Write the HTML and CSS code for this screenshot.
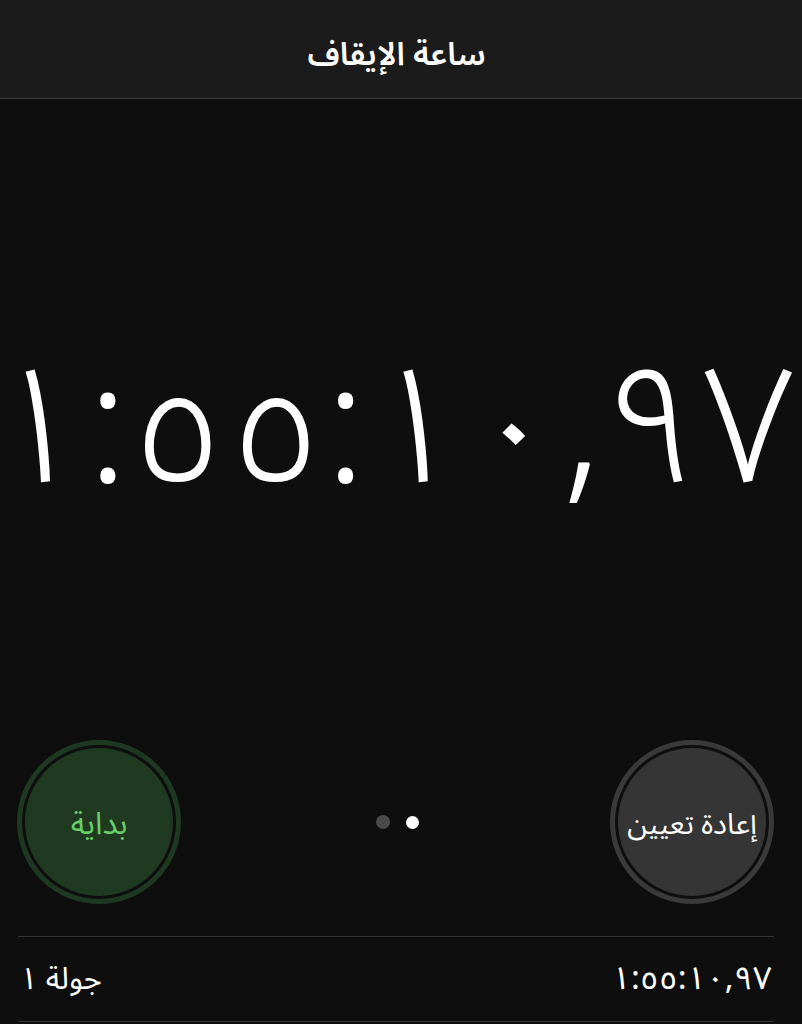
FILE: index.html
```html
<!DOCTYPE html>
<html lang="ar" dir="rtl">
<head>
<meta charset="utf-8">
<title>ساعة الإيقاف</title>
<link rel="stylesheet" href="styles.css">
</head>
<body>
<div class="app">
  <header class="topbar">
    <h1 class="title">ساعة الإيقاف</h1>
  </header>
  <main class="main">
    <div class="clock"><span class="clock-text">١:٥٥:١٠,٩٧</span></div>
    <div class="controls">
      <button class="btn btn-reset"><span class="btn-inner">إعادة تعيين</span></button>
      <div class="pager">
        <span class="dot dot-on"></span>
        <span class="dot dot-off"></span>
      </div>
      <button class="btn btn-start"><span class="btn-inner">بداية</span></button>
    </div>
    <ul class="laps">
      <li class="lap">
        <span class="lap-time">١:٥٥:١٠,٩٧</span>
        <span class="lap-name">جولة ١</span>
      </li>
    </ul>
  </main>
</div>
</body>
</html>
```

FILE: styles.css
```css
html, body {
  margin: 0;
  padding: 0;
  background: #0e0e0e;
}
body {
  font-family: "Noto Sans Arabic", "DejaVu Sans", sans-serif;
  color: #ffffff;
}
.app {
  width: 802px;
  height: 1024px;
  overflow: hidden;
  display: flex;
  flex-direction: column;
}
.topbar {
  height: 99px;
  box-sizing: border-box;
  padding-top: 12px;
  background: #1b1b1b;
  border-bottom: 1px solid #3a3a3a;
  display: flex;
  align-items: center;
  justify-content: center;
}
.title {
  margin: 0 9px 0 0;
  font-size: 32px;
  font-weight: 600;
  line-height: 1;
}
.main {
  flex: 1;
  display: flex;
  flex-direction: column;
}
.clock {
  direction: ltr;
  text-align: center;
  font-size: 166px;
  font-weight: 300;
  line-height: 1;
  margin-top: 248px;
  height: 392px;
  white-space: nowrap;
}
.clock-text {
  display: inline-block;
  transform: translateX(-8px) scaleX(1.034);
}
.controls {
  display: flex;
  align-items: center;
  justify-content: space-between;
  padding: 0 28px 0 17px;
  height: 166px;
}
.btn {
  width: 164px;
  height: 164px;
  border-radius: 50%;
  padding: 3px;
  border: 5px solid;
  background: #0e0e0e;
  box-sizing: border-box;
  display: flex;
  cursor: pointer;
  font-family: inherit;
}
.btn-inner {
  flex: 1;
  border-radius: 50%;
  display: flex;
  align-items: center;
  justify-content: center;
  font-size: 29px;
  padding-top: 4px;
}
.btn-reset { border-color: #3a3a3a; }
.btn-reset .btn-inner { background: #353535; color: #ffffff; }
.btn-start { border-color: #1f3821; }
.btn-start .btn-inner { background: #1f3a21; color: #68cf68; font-size: 31px; }
.pager {
  display: flex;
  gap: 16px;
  align-items: center;
  margin-left: 4px;
}
.dot {
  width: 14px;
  height: 14px;
  border-radius: 50%;
}
.dot-on { background: #ffffff; width: 13px; height: 13px; }
.dot-off { background: #4a4a4a; }
.laps {
  list-style: none;
  margin: 31px 28px 0 18px;
  padding: 0;
  border-top: 1px solid #333333;
}
.lap {
  height: 84px;
  border-bottom: 1px solid #333333;
  display: flex;
  align-items: center;
  justify-content: space-between;
  font-size: 31px;
}
.lap-name { margin-left: 2px; }
.lap-time {
  direction: ltr;
  display: inline-block;
  font-size: 32px;
  transform: scaleX(1.04);
  transform-origin: right center;
  margin-right: 2px;
}
```
